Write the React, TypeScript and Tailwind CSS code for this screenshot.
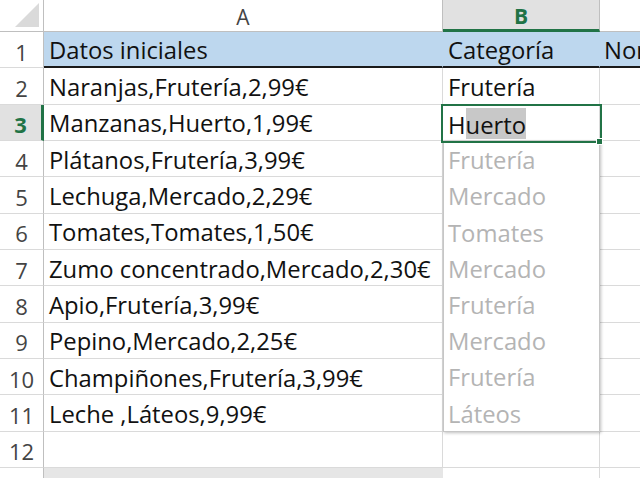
import React from "react";

const rowsA = [
  "Datos iniciales",
  "Naranjas,Frutería,2,99€",
  "Manzanas,Huerto,1,99€",
  "Plátanos,Frutería,3,99€",
  "Lechuga,Mercado,2,29€",
  "Tomates,Tomates,1,50€",
  "Zumo concentrado,Mercado,2,30€",
  "Apio,Frutería,3,99€",
  "Pepino,Mercado,2,25€",
  "Champiñones,Frutería,3,99€",
  "Leche ,Láteos,9,99€",
  "",
];

const suggestions = [
  "Frutería",
  "Mercado",
  "Tomates",
  "Mercado",
  "Frutería",
  "Mercado",
  "Frutería",
  "Láteos",
];

const font = { fontFamily: '"Open Sans", "Noto Sans", sans-serif' };

export default function App() {
  return (
    <div
      className="relative w-[640px] h-[478px] overflow-hidden bg-white text-[23.8px] leading-none text-[#111]"
      style={font}
    >
      {/* header row */}
      <div className="flex h-[32px]">
        <div className="relative w-[44px] shrink-0 border-r border-b border-[#bfbfbf] bg-white">
          <div className="absolute right-[4px] bottom-[4px] w-0 h-0 border-l-[24px] border-l-transparent border-b-[24px] border-b-[#dadada]" />
        </div>
        <div className="w-[399px] shrink-0 border-r border-b border-[#bfbfbf] flex items-center justify-center pt-[3px] text-[#444] text-[21px]">
          A
        </div>
        <div className="w-[157px] shrink-0 border-r border-[#bfbfbf] border-b-[3px] border-b-[#217346] bg-[#e1e1e1] flex items-center justify-center pt-[3px] text-[#217346] font-bold text-[21px]">
          B
        </div>
        <div className="flex-1 border-b border-[#bfbfbf]" />
      </div>

      {rowsA.map((txt, i) => {
        const n = i + 1;
        const isHeader = n === 1;
        const isSel = n === 3;
        const rowBorder = isHeader ? "border-b-2 border-b-[#1a1a1a]" : "border-b border-b-[#dadada]";
        return (
          <div key={n} className="flex h-[36.33px]">
            <div
              className={
                "w-[44px] shrink-0 flex items-center justify-center pt-[4px] text-[22px] border-b border-b-[#dadada] " +
                (isSel
                  ? "bg-[#e1e1e1] text-[#217346] font-bold border-r-[3px] border-r-[#217346]"
                  : "border-r border-r-[#bfbfbf] text-[#444]")
              }
            >
              {n}
            </div>
            <div
              className={
                "w-[399px] shrink-0 flex items-center pl-[5px] pt-[4px] whitespace-nowrap border-r " +
                (isHeader ? "bg-[#bdd7ee] border-r-[#bdd7ee] " : "border-r-[#dadada] ") +
                rowBorder
              }
            >
              {txt}
            </div>
            <div
              className={
                "w-[157px] shrink-0 flex items-center pl-[5px] pt-[4px] whitespace-nowrap border-r " +
                (isHeader ? "bg-[#bdd7ee] border-r-[#bdd7ee] " : "border-r-[#dadada] ") +
                rowBorder
              }
            >
              {n === 1 ? "Categoría" : n === 2 ? "Frutería" : ""}
            </div>
            <div
              className={
                "flex-1 min-w-0 flex items-center pl-[4px] pt-[4px] whitespace-nowrap overflow-hidden " +
                (isHeader ? "bg-[#bdd7ee] " : "") +
                rowBorder
              }
            >
              {n === 1 ? "Nombre" : ""}
            </div>
          </div>
        );
      })}

      {/* row 13 */}
      <div className="flex h-[20px]">
        <div className="w-[44px] shrink-0 border-r border-r-[#bfbfbf]" />
        <div className="w-[399px] shrink-0 bg-[#e6e6e6]" />
        <div className="w-[157px] shrink-0 border-r border-r-[#dadada]" />
        <div className="flex-1" />
      </div>

      {/* autocomplete list */}
      <div className="absolute left-[443px] top-[141px] w-[157px] h-[291px] bg-white border border-[#c6c6c6] shadow-[1px_1px_3px_rgba(0,0,0,0.25)] flex flex-col">
        {suggestions.map((s, i) => (
          <div key={i} className="h-[36.2px] shrink-0 flex items-center pl-[4px] pt-[2px] text-[#b4b4b4]">
            {s}
          </div>
        ))}
      </div>

      {/* selected cell */}
      <div className="absolute left-[441px] top-[104px] w-[161px] h-[39px] border-2 border-[#217346] flex items-center pl-[5px]">
        <span className="pt-[4px]">H</span>
        <span className="bg-[#c8c8c8] h-[31px] flex items-center pt-[4px]">uerto</span>
      </div>
      <div className="absolute left-[596px] top-[138px] w-[7px] h-[7px] bg-[#217346] border border-white" />
    </div>
  );
}
